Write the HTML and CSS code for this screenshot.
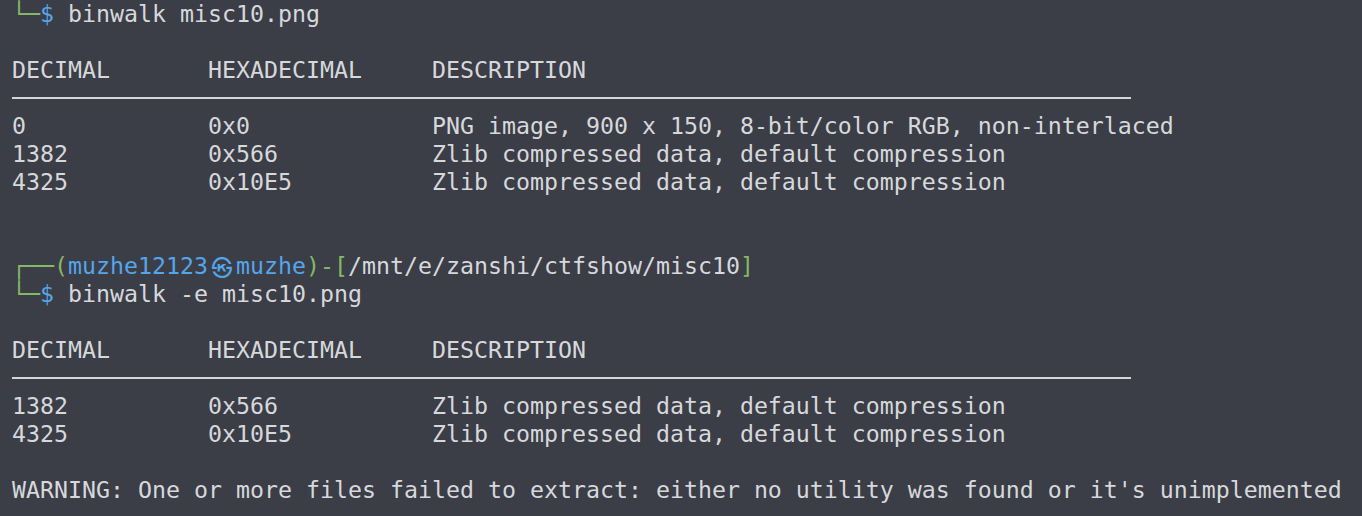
FILE: index.html
```html
<!DOCTYPE html>
<html lang="en">
<head>
<meta charset="utf-8">
<title>terminal</title>
<link rel="stylesheet" href="styles.css">
</head>
<body>
<main class="term">
<div class="line"><span class="g box">└─</span><span class="b">$</span> binwalk misc10.png</div>
<div class="line"> </div>
<div class="line">DECIMAL       HEXADECIMAL     DESCRIPTION</div>
<div class="rule"><span class="bar"></span></div>
<div class="line">0             0x0             PNG image, 900 x 150, 8-bit/color RGB, non-interlaced</div>
<div class="line">1382          0x566           Zlib compressed data, default compression</div>
<div class="line">4325          0x10E5          Zlib compressed data, default compression</div>
<div class="line"> </div>
<div class="line"> </div>
<div class="line"><span class="g box">┌──</span><span class="g">(</span><span class="b">muzhe12123<span class="kmark">㉿</span>muzhe</span><span class="g">)-[</span>/mnt/e/zanshi/ctfshow/misc10<span class="g">]</span></div>
<div class="line"><span class="g box">└─</span><span class="b">$</span> binwalk -e misc10.png</div>
<div class="line"> </div>
<div class="line">DECIMAL       HEXADECIMAL     DESCRIPTION</div>
<div class="rule"><span class="bar"></span></div>
<div class="line">1382          0x566           Zlib compressed data, default compression</div>
<div class="line">4325          0x10E5          Zlib compressed data, default compression</div>
<div class="line"> </div>
<div class="line">WARNING: One or more files failed to extract: either no utility was found or it's unimplemented</div>
</main>
</body>
</html>
```

FILE: styles.css
```css
html, body {
  margin: 0;
  padding: 0;
  background: #3b3e46;
}

.term {
  padding: 0 0 0 12px;
  font-family: "DejaVu Sans Mono", "Liberation Mono", "Noto Sans CJK KR", monospace;
  font-size: 23.25px;
  line-height: 28px;
  color: #d6d8dc;
}

.line {
  height: 28px;
  white-space: pre;
}

.g {
  color: #86b865;
}

.box {
  font-weight: bold;
}

.b {
  color: #55a5ea;
}

.kmark {
  display: inline-block;
  width: 28px;
  text-align: center;
  font-family: "Noto Sans CJK KR", "DejaVu Sans", sans-serif;
  font-size: 21px;
  vertical-align: top;
}

.rule {
  height: 28px;
  display: flex;
  align-items: center;
}

.bar {
  display: block;
  width: 1119px;
  height: 2px;
  margin-top: -1px;
  background: #d3d5d9;
}
```
